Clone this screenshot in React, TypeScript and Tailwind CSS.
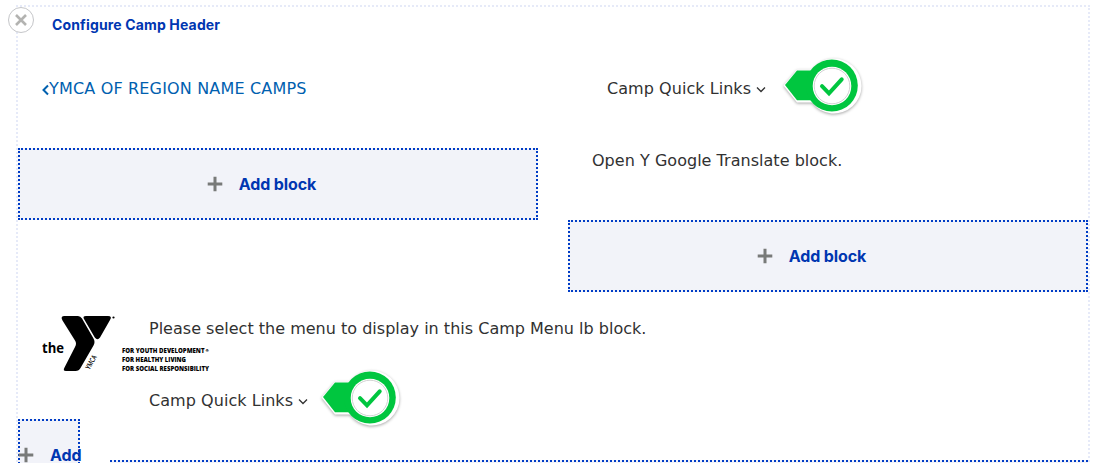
import type { ReactNode } from "react";

function Pointer() {
  return (
    <svg width="84" height="66" viewBox="0 0 84 66" className="block shrink-0" style={{ overflow: "visible" }}>
      <g className="drop-shadow-[0_1.5px_1.5px_rgba(0,0,0,0.35)]">
        <path d="M3.5 30.5L17 14.5H32A27.5 27.5 0 1 1 32 47.5H17Z" fill="#fff" />
      </g>
      <path d="M5 30L17 15.5H34V45.2H17Z" fill="#00c63f" />
      <circle cx="51.8" cy="30.5" r="26" fill="#00c63f" />
      <circle cx="52" cy="31" r="19.3" fill="#fff" />
      <circle cx="52" cy="31" r="17.8" fill="none" stroke="#d2d2d2" strokeWidth="1" />
      <path d="M42 31.2L49 38.4L61.7 24.3" fill="none" stroke="#00c63f" strokeWidth="4" strokeLinecap="round" />
    </svg>
  );
}

function QuickLinks() {
  return (
    <div className="flex h-6 items-center">
      <span className="tracking-[0.05px]">Camp Quick Links</span>
      <svg width="10" height="8" viewBox="0 0 10 8" className="ml-[5px] mt-[2px]">
        <path d="M1 1.5L5 5.5L9 1.5" fill="none" stroke="#313131" strokeWidth="1.3" />
      </svg>
    </div>
  );
}

function Plus() {
  return (
    <svg width="16" height="16" viewBox="0 0 16 16" className="shrink-0">
      <path d="M8 0.7V15.3M0.7 8H15.3" stroke="#787a79" strokeWidth="3" />
    </svg>
  );
}

function AddBlock({ className, children }: { className: string; children: ReactNode }) {
  return (
    <div className={`flex h-[72px] items-center border-2 border-dotted border-[#003cc5] bg-[#f2f3f9] ${className}`}>
      <Plus />
      <span className="ml-4 whitespace-nowrap font-[Inter] text-base font-bold tracking-[-0.1px] text-[#0036b1]">{children}</span>
    </div>
  );
}

function Logo() {
  return (
    <svg width="170" height="58" viewBox="0 0 170 58" className="block">
      <text x="0" y="38" fontFamily="Open Sans" fontWeight="700" fontSize="15" textLength="22" lengthAdjust="spacingAndGlyphs">the</text>
      <path d="M20.5 5.5Q18 1 22.5 1H36Q38.5 1 40 3.5L51.5 23.5Q53.5 27 51.5 30.5L38.5 53Q37 56 33.5 56H24Q20.5 56 22.5 52.5L33 32Q35 28.5 33 25.5Z" />
      <path d="M44 1H66Q70.5 1 68 5L58 22.5Q55.5 26 52.8 22.5L42 4Q40.3 1 44 1Z" />
      <circle cx="71.5" cy="2.5" r="1.1" />
      <text transform="translate(47.5 55) rotate(-60)" fontFamily="Open Sans" fontWeight="600" fontSize="7.2" textLength="15" lengthAdjust="spacingAndGlyphs">YMCA</text>
      <g fontFamily="Open Sans" fontWeight="800" fontSize="6.4">
        <text x="80" y="37.5" textLength="82.5" lengthAdjust="spacingAndGlyphs">FOR YOUTH DEVELOPMENT</text>
        <text x="163.5" y="37" fontSize="4">®</text>
        <text x="80" y="46.5" textLength="64" lengthAdjust="spacingAndGlyphs">FOR HEALTHY LIVING</text>
        <text x="80" y="55.5" textLength="87" lengthAdjust="spacingAndGlyphs">FOR SOCIAL RESPONSIBILITY</text>
      </g>
    </svg>
  );
}

export default function App() {
  return (
    <main className="relative h-[463px] w-[1104px] overflow-hidden bg-white pl-4 pt-[5px] font-['DejaVu_Sans',sans-serif] text-base leading-6 text-[#313131]">
      <section className="h-[500px] w-[1074px] border-2 border-dotted border-[#e6eaf8]">
        <header className="h-[57px] pl-[34px] pt-[6px]">
          <a className="font-[Inter] text-sm font-bold tracking-[0.15px] text-[#0036b1]">Configure Camp Header</a>
        </header>
        <div className="grid grid-cols-2 gap-[30px]">
          <div>
            <div className="flex h-[84px] pl-6 pt-[13px]">
              <a className="flex h-6 items-center text-[#0060af]">
                <svg width="7" height="12" viewBox="0 0 7 12" className="mt-[2px]">
                  <path d="M6 1.5L1.5 6L6 10.5" fill="none" stroke="#0060af" strokeWidth="2" />
                </svg>
                <span className="tracking-[0.17px]">YMCA OF REGION NAME CAMPS</span>
              </a>
            </div>
            <AddBlock className="justify-center pr-[33px]">Add block</AddBlock>
          </div>
          <div>
            <div className="flex h-[85px] items-start pl-[39px]">
              <div className="pt-[13px]"><QuickLinks /></div>
              <div className="-mt-[9px] ml-[14px]"><Pointer /></div>
            </div>
            <p className="h-[71px] pl-6 tracking-[0.03px]">Open Y Google Translate block.</p>
            <AddBlock className="justify-center pr-[33px]">Add block</AddBlock>
          </div>
        </div>
        <div className="grid grid-cols-[62px_978px] gap-[30px]">
          <div>
            <div className="h-[127px] w-[200px] pl-6 pt-[23px]"><Logo /></div>
            <AddBlock className="[&>svg]:-ml-[2px]">Add</AddBlock>
          </div>
          <div>
            <p className="h-[72px] pl-[39px] pt-[25px] tracking-[0.01px]">Please select the menu to display in this Camp Menu lb block.</p>
            <div className="flex h-24 items-start pl-[39px]">
              <div className="pt-[25px]"><QuickLinks /></div>
              <div className="mt-[3px] ml-[10px]"><Pointer /></div>
            </div>
            <AddBlock className="justify-center">Add block</AddBlock>
          </div>
        </div>
      </section>
      <button aria-label="Remove section" className="absolute left-2 top-[7px] flex h-[26px] w-[26px] items-center justify-center rounded-full border border-[#c5c6c9] bg-white">
        <svg width="12" height="12" viewBox="0 0 12 12">
          <path d="M1 1L11 11M11 1L1 11" stroke="#b3b3b1" strokeWidth="2.6" />
        </svg>
      </button>
    </main>
  );
}
